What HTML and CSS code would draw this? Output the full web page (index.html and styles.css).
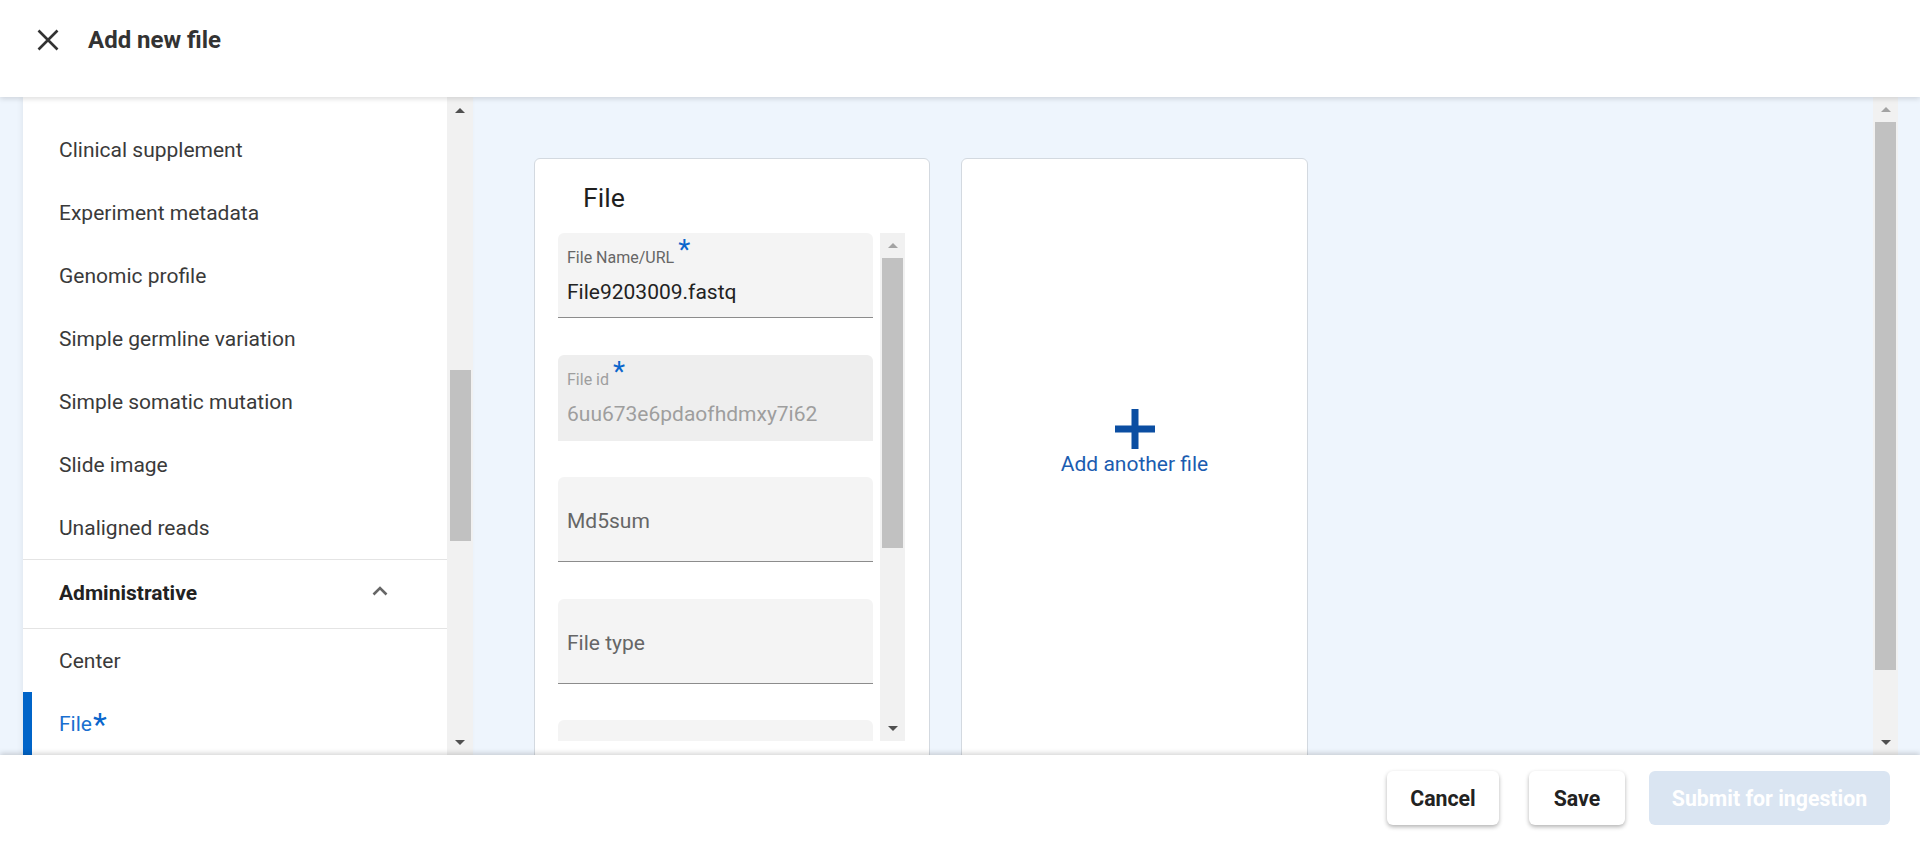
FILE: index.html
```html
<!DOCTYPE html>
<html lang="en">
<head>
<meta charset="utf-8">
<title>Add new file</title>
<link rel="stylesheet" href="styles.css">
</head>
<body>
<div class="app">
  <header class="topbar">
    <button class="close" aria-label="Close">
      <svg width="22" height="22" viewBox="0 0 22 22"><path d="M1.5 1.5 L20.5 20.5 M20.5 1.5 L1.5 20.5" stroke="#333" stroke-width="2.6" fill="none"/></svg>
    </button>
    <h1 class="title">Add new file</h1>
  </header>

  <div class="workspace">
    <nav class="sidebar">
      <div class="side-list">
        <div class="side-item">Clinical supplement</div>
        <div class="side-item">Experiment metadata</div>
        <div class="side-item">Genomic profile</div>
        <div class="side-item">Simple germline variation</div>
        <div class="side-item">Simple somatic mutation</div>
        <div class="side-item">Slide image</div>
        <div class="side-item">Unaligned reads</div>
        <div class="side-group">
          <span>Administrative</span>
          <svg width="16" height="11" viewBox="0 0 16 11"><path d="M1.5 9.5 L8 3 L14.5 9.5" stroke="#666" stroke-width="2.6" fill="none"/></svg>
        </div>
        <div class="side-item">Center</div>
        <div class="side-item active">File<span class="req">*</span></div>
      </div>
      <div class="sb sb-side">
        <div class="sb-btn"><span class="arrow-up"></span></div>
        <div class="sb-track"><div class="thumb"></div></div>
        <div class="sb-btn"><span class="arrow-down"></span></div>
      </div>
    </nav>

    <main class="main">
      <div class="main-content">
        <section class="card file-card">
          <h2 class="card-title">File</h2>
          <div class="form-scroll">
            <div class="fields">
              <div class="field">
                <div class="field-label">File Name/URL <span class="req-sm">*</span></div>
                <div class="field-value">File9203009.fastq</div>
              </div>
              <div class="field disabled">
                <div class="field-label">File id <span class="req-sm">*</span></div>
                <div class="field-value">6uu673e6pdaofhdmxy7i62</div>
              </div>
              <div class="field empty">Md5sum</div>
              <div class="field empty">File type</div>
              <div class="field empty"></div>
            </div>
            <div class="sb sb-form">
              <div class="sb-btn"><span class="arrow-up light"></span></div>
              <div class="sb-track"><div class="thumb"></div></div>
              <div class="sb-btn"><span class="arrow-down"></span></div>
            </div>
          </div>
        </section>

        <section class="card add-card">
          <svg class="plus" width="40" height="40" viewBox="0 0 40 40"><rect x="0" y="16.5" width="40" height="7" fill="#0b4ea2"/><rect x="16.5" y="0" width="7" height="40" fill="#0b4ea2"/></svg>
          <span class="add-text">Add another file</span>
        </section>
      </div>
      <div class="sb sb-main">
        <div class="sb-btn"><span class="arrow-up light"></span></div>
        <div class="sb-track"><div class="thumb"></div></div>
        <div class="sb-btn"><span class="arrow-down"></span></div>
      </div>
    </main>
  </div>

  <footer class="actions">
    <button class="btn btn-cancel">Cancel</button>
    <button class="btn btn-save">Save</button>
    <button class="btn btn-primary">Submit for ingestion</button>
  </footer>
</div>
</body>
</html>
```

FILE: styles.css
```css
* { box-sizing: border-box; }
html, body { margin: 0; height: 100%; }
body {
  font-family: Roboto, "Liberation Sans", sans-serif;
  color: #333;
  overflow: hidden;
  background: #fff;
}
.app { display: flex; flex-direction: column; height: 846px; }

/* header */
.topbar {
  height: 97px;
  flex: none;
  display: flex;
  align-items: center;
  gap: 29px;
  padding: 0 0 17px 37px;
  background: #fff;
  box-shadow: 0 2px 5px rgba(0,0,0,.13);
  position: relative;
  z-index: 2;
}
.close { width: 22px; height: 22px; border: 0; padding: 0; background: none; display: flex; }
.title { margin: 0; font-size: 24px; font-weight: 700; color: #333; }

/* workspace */
.workspace {
  flex: 1;
  min-height: 0;
  display: flex;
  background: #eef5fd;
  padding-left: 23px;
  overflow: hidden;
}
.sidebar { display: flex; width: 450px; flex: none; box-shadow: -2px 0 5px rgba(0,0,0,.05); }
.side-list { width: 424px; background: #fff; padding-top: 21px; overflow: hidden; }
.side-item {
  height: 63px;
  display: flex;
  align-items: center;
  padding-left: 36px;
  font-size: 21px;
  color: #3a3a3a;
}
.side-group {
  height: 70px;
  display: flex;
  align-items: center;
  justify-content: space-between;
  padding: 0 59px 3px 36px;
  border-top: 1px solid #e4e4e4;
  border-bottom: 1px solid #e4e4e4;
  font-size: 21px;
  font-weight: 700;
  color: #222;
}
.side-group svg { margin-bottom: 5px; }
.side-item.active {
  color: #1a6fd0;
  border-left: 9px solid #0064c8;
  padding-left: 27px;
}
.req {
  color: #0a66cc;
  font-size: 32px;
  line-height: 0;
  vertical-align: 5px;
  margin-left: 1px;
}

/* scrollbars */
.sb { flex: none; background: #f1f1f1; display: flex; flex-direction: column; }
.sb-btn { flex: none; display: flex; align-items: center; justify-content: center; }
.sb-track { flex: 1; }
.thumb { background: #c1c1c1; }
.arrow-up, .arrow-down {
  width: 0; height: 0;
  border-left: 5px solid transparent;
  border-right: 5px solid transparent;
}
.arrow-up { border-bottom: 5px solid #505050; }
.arrow-down { border-top: 5px solid #505050; }
.arrow-up.light { border-bottom-color: #a3a3a3; }

.sb-side { width: 26px; }
.sb-side .sb-btn { height: 26px; }
.sb-side .sb-track { padding: 0 2px 0 3px; }
.sb-side .thumb { margin-top: 247px; height: 171px; }

.sb-main { width: 25px; }
.sb-main .sb-btn { height: 25px; }
.sb-main .sb-track { padding: 0 2px; }
.sb-main .thumb { margin-top: 0; height: 548px; }

.sb-form { width: 25px; }
.sb-form .sb-btn { height: 25px; }
.sb-form .sb-track { padding: 0 2px; }
.sb-form .thumb { height: 290px; }

/* main */
.main { flex: 1; min-width: 0; display: flex; padding-right: 22px; }
.main-content {
  flex: 1;
  display: flex;
  align-items: flex-start;
  gap: 31px;
  padding: 61px 0 0 61px;
  overflow: hidden;
}
.card {
  flex: none;
  height: 640px;
  background: #fff;
  border: 1px solid #d3d9e0;
  border-radius: 6px;
}
.file-card { width: 396px; padding: 23px 24px 0 23px; }
.card-title {
  margin: 0 0 19px 25px;
  font-size: 26.7px;
  line-height: 32px;
  font-weight: 400;
  color: #1f1f1f;
}
.form-scroll { display: flex; gap: 7px; height: 508px; }
.fields {
  width: 315px;
  display: flex;
  flex-direction: column;
  gap: 36.5px;
  overflow: hidden;
}
.field {
  flex: none;
  height: 85px;
  padding: 16px 9px 0;
  background: #f4f4f4;
  border-radius: 6px 6px 0 0;
  border-bottom: 1px solid #8c8c8c;
}
.field-label { font-size: 16px; line-height: 18px; color: #666; white-space: nowrap; }
.field-value { margin-top: 12px; font-size: 21px; line-height: 26px; color: #222; }
.req-sm {
  color: #0a66cc;
  font-size: 28px;
  line-height: 0;
  vertical-align: 4px;
}
.field.disabled { background: #eeeeee; border-bottom-color: transparent; height: 86px; }
.field.disabled .field-label,
.field.disabled .field-value { color: #9e9e9e; }
.field.empty {
  display: flex;
  align-items: center;
  padding-top: 4px;
  font-size: 21px;
  color: #666;
}

.add-card {
  width: 347px;
  padding-top: 250px;
  display: flex;
  flex-direction: column;
  align-items: center;
  gap: 3px;
}
.plus { display: block; }
.add-text { font-size: 21px; line-height: 24px; color: #1b5cb0; }

/* footer */
.actions {
  height: 91px;
  flex: none;
  display: flex;
  justify-content: flex-end;
  align-items: flex-start;
  gap: 24px;
  padding: 16px 30px 0 0;
  background: #fff;
  box-shadow: 0 -2px 5px rgba(0,0,0,.16);
  position: relative;
  z-index: 2;
}
.btn {
  height: 54px;
  padding: 0;
  border: 0;
  border-radius: 6px;
  background: #fff;
  font-family: Roboto, "Liberation Sans", sans-serif;
  font-size: 21.3px;
  font-weight: 700;
  color: #222;
  box-shadow: 0 2px 4px rgba(0,0,0,.3);
}
.btn-cancel { width: 112px; margin-right: 6px; }
.btn-save { width: 96px; }
.btn-primary { width: 241px; background: #dae5f2; color: #fff; box-shadow: none; }
```
